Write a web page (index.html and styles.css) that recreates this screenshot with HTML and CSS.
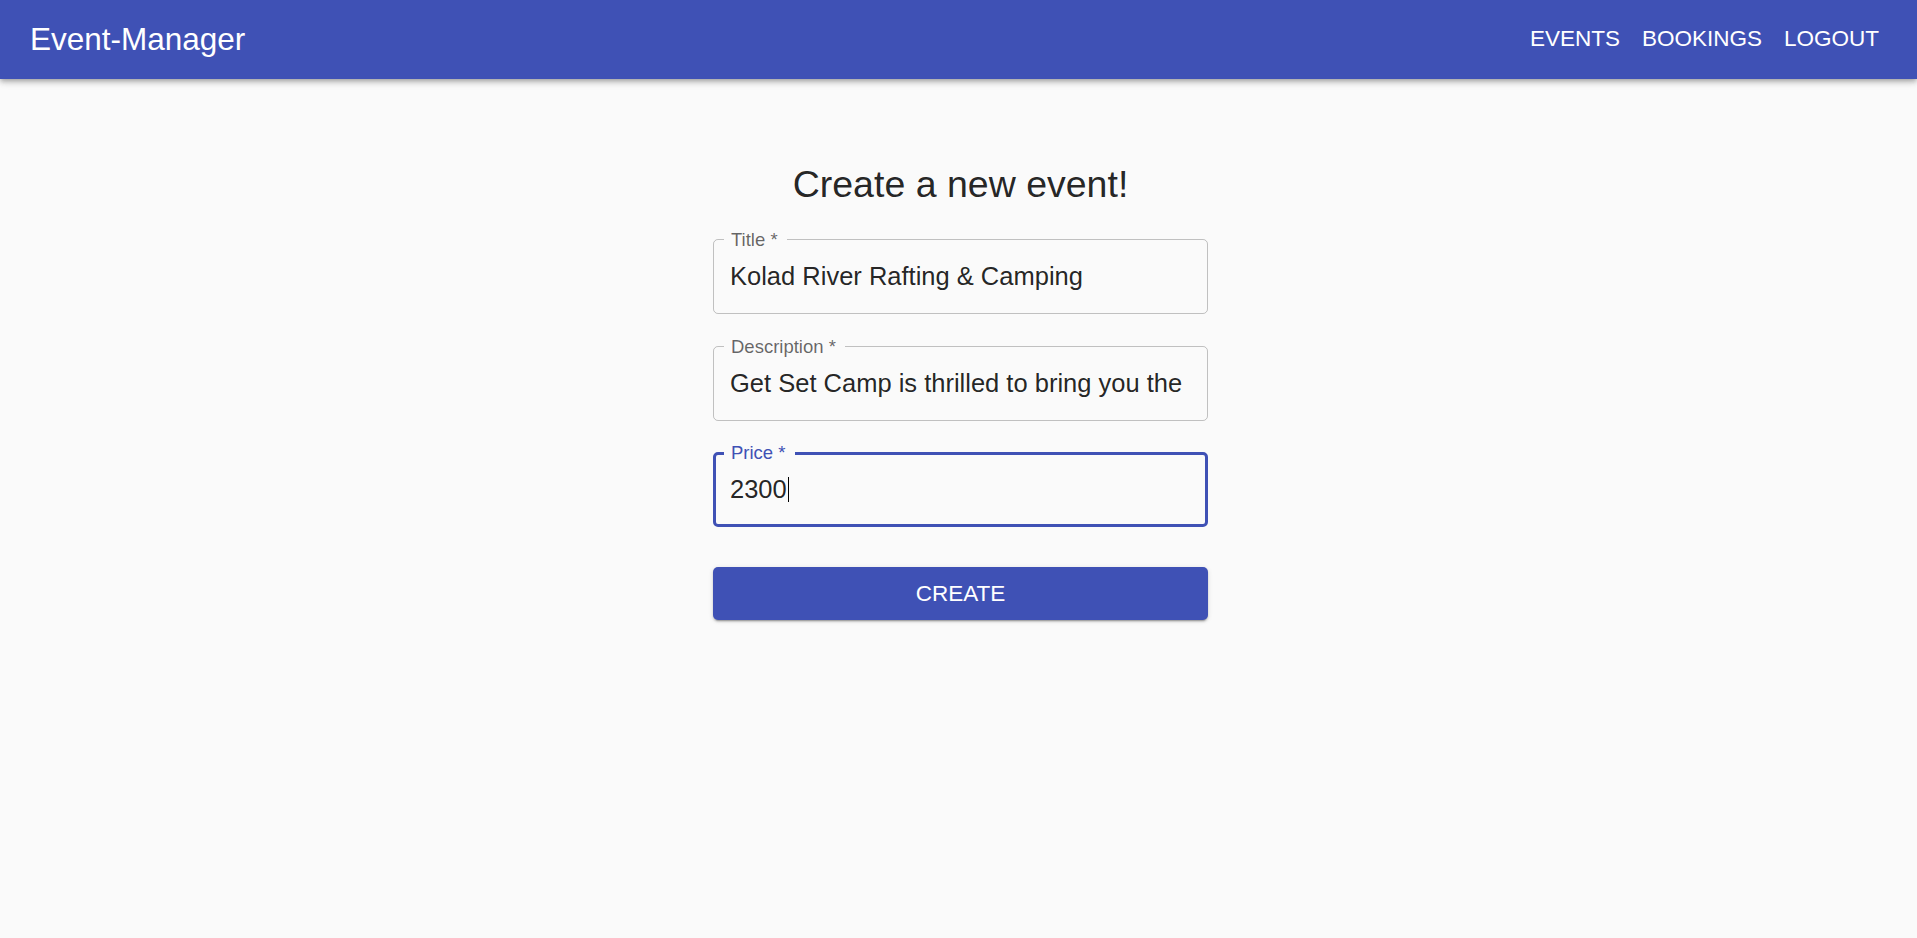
FILE: index.html
```html
<!DOCTYPE html>
<html lang="en">
<head>
<meta charset="utf-8">
<title>Event-Manager</title>
<link rel="stylesheet" href="styles.css">
</head>
<body>
<header class="app-bar">
  <div class="toolbar">
    <h1 class="brand">Event-Manager</h1>
    <nav class="nav">
      <a class="nav-link" href="#">EVENTS</a>
      <a class="nav-link" href="#">BOOKINGS</a>
      <a class="nav-link" href="#">LOGOUT</a>
    </nav>
  </div>
</header>
<main class="page">
  <form class="event-form">
    <h2 class="form-title">Create a new event!</h2>
    <div class="field">
      <span class="field-label">Title *</span>
      <div class="field-value">Kolad River Rafting &amp; Camping</div>
    </div>
    <div class="field">
      <span class="field-label">Description *</span>
      <div class="field-value">Get Set Camp is thrilled to bring you the</div>
    </div>
    <div class="field field-focused">
      <span class="field-label">Price *</span>
      <div class="field-value">2300<span class="caret"></span></div>
    </div>
    <button class="submit" type="button">CREATE</button>
  </form>
</main>
</body>
</html>
```
FILE: styles.css
```css
html, body {
  margin: 0;
  padding: 0;
}

body {
  background: #fafafa;
  font-family: "Liberation Sans", Arial, sans-serif;
  color: rgba(0, 0, 0, 0.87);
  min-height: 938px;
}

.app-bar {
  position: relative;
  z-index: 1;
  height: 79px;
  background: #3f51b5;
  color: #fff;
  box-shadow: 0 2px 4px -1px rgba(0, 0, 0, 0.2), 0 4px 5px 0 rgba(0, 0, 0, 0.14), 0 1px 10px 0 rgba(0, 0, 0, 0.12);
}

.toolbar {
  box-sizing: border-box;
  height: 100%;
  display: flex;
  align-items: center;
  justify-content: space-between;
  padding: 0 27px 2px 30px;
}

.brand {
  margin: 0;
  font-size: 31.5px;
  font-weight: 400;
  line-height: 36px;
}

.nav {
  display: flex;
  align-items: center;
}

.nav-link {
  padding: 0 11px;
  font-size: 22.5px;
  line-height: 28px;
  color: #fff;
  text-decoration: none;
}

.page {
  padding: 83px 0 0 4px;
}

.event-form {
  width: 495px;
  margin: 0 auto;
  display: flex;
  flex-direction: column;
}

.form-title {
  margin: 0 0 33px;
  font-size: 37.5px;
  font-weight: 400;
  line-height: 44px;
  text-align: center;
  color: rgba(0, 0, 0, 0.87);
}

.field {
  position: relative;
  box-sizing: border-box;
  height: 75px;
  margin-bottom: 31.5px;
  padding: 0 16px 1px;
  display: flex;
  align-items: center;
  border: 1px solid rgba(0, 0, 0, 0.23);
  border-radius: 5px;
}

.field-label {
  position: absolute;
  top: -11px;
  left: 10px;
  padding: 0 9px 0 7px;
  font-size: 18.5px;
  line-height: 22px;
  color: rgba(0, 0, 0, 0.6);
  background: #fafafa;
}

.field-value {
  font-size: 25.5px;
  line-height: 30px;
  white-space: nowrap;
  overflow: hidden;
  color: rgba(0, 0, 0, 0.87);
}

.field-focused {
  margin-bottom: 0;
  border: 3px solid #3f51b5;
  padding: 0 14px 1px;
}

.field-focused .field-label {
  top: -13px;
  left: 8px;
  color: #3f51b5;
}

.caret {
  display: inline-block;
  width: 1px;
  height: 25px;
  margin-left: 1px;
  vertical-align: -4px;
  background: #000;
}

.submit {
  margin-top: 40px;
  height: 53px;
  width: 100%;
  border: none;
  border-radius: 5px;
  background: #3f51b5;
  color: #fff;
  font-family: "Liberation Sans", Arial, sans-serif;
  font-size: 22.5px;
  cursor: pointer;
  box-shadow: 0 3px 1px -2px rgba(0, 0, 0, 0.2), 0 2px 2px 0 rgba(0, 0, 0, 0.14), 0 1px 5px 0 rgba(0, 0, 0, 0.12);
}
```
